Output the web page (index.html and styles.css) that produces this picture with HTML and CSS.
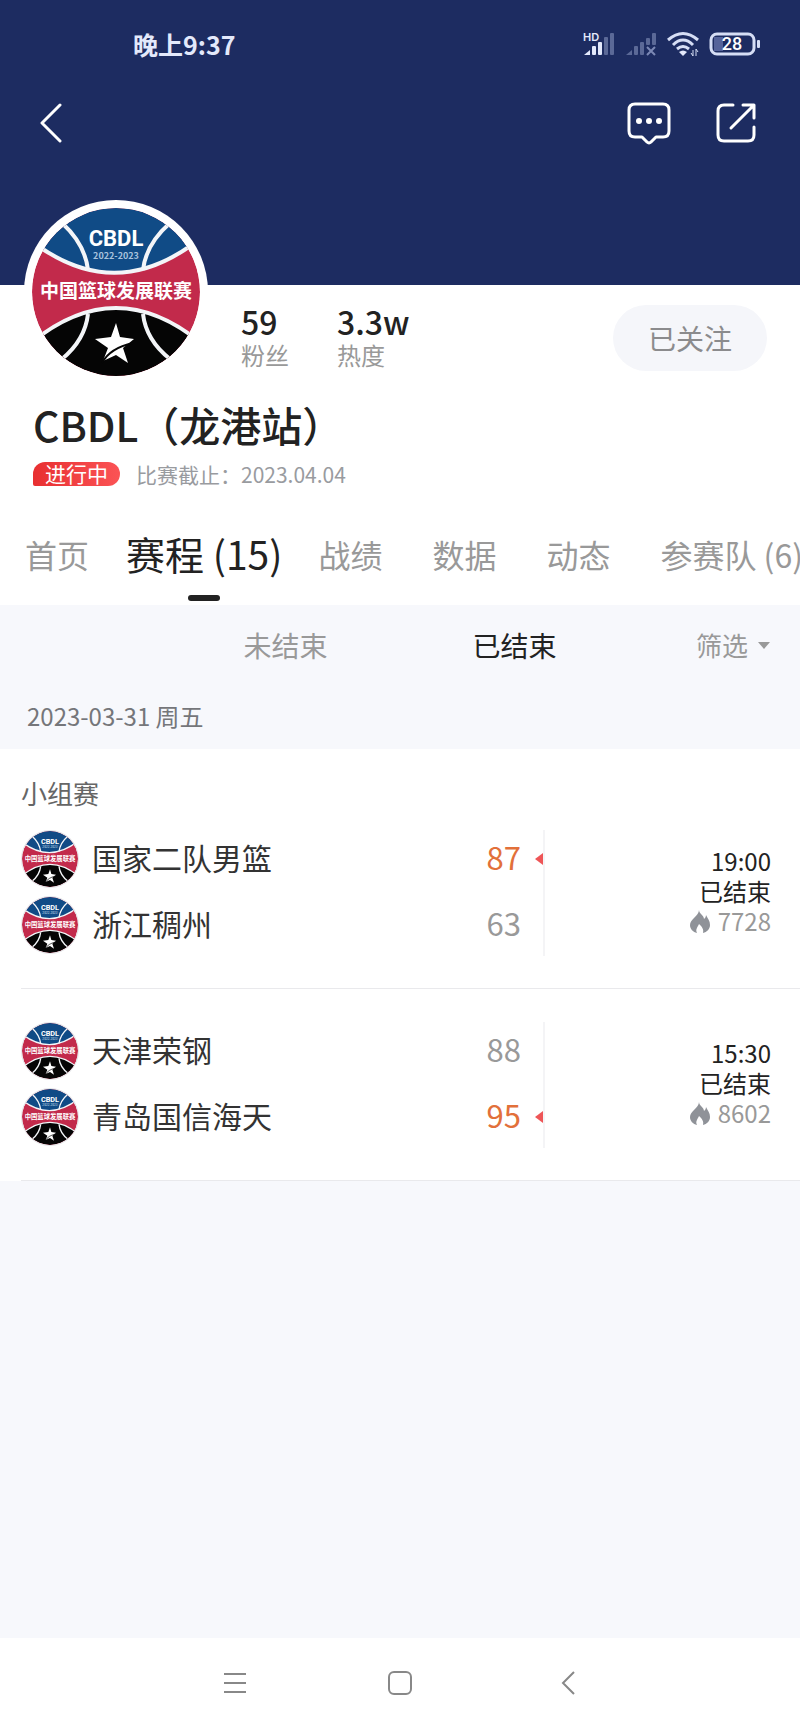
FILE: index.html
```html
<!DOCTYPE html>
<html lang="zh-CN">
<head>
<meta charset="utf-8">
<meta name="viewport" content="width=device-width, initial-scale=1">
<title>CBDL（龙港站）</title>
<link rel="stylesheet" href="styles.css">
</head>
<body>
<svg class="defs" width="0" height="0" aria-hidden="true">
  <defs>
    <clipPath id="ball"><circle cx="84" cy="84" r="84"/></clipPath>
    <symbol id="cbdl" viewBox="0 0 168 168">
      <g clip-path="url(#ball)">
        <rect width="168" height="168" fill="#c22a4b"/>
        <path d="M-8 27Q84 104 176 24V-4H-8Z" fill="#104b86"/>
        <path d="M-8 141Q84 59 176 141V172H-8Z" fill="#050505"/>
        <g fill="none" stroke="#f3f5f8" stroke-width="4">
          <path d="M-8 27Q84 104 176 24"/>
          <path d="M-8 141Q84 59 176 141"/>
          <path d="M30 15Q53 36 56 62M138 15Q114 36 111 62M56 106Q53 132 30 151M111 106Q114 132 138 151"/>
        </g>
        <path d="M84 115L88 129L102 131L91 140L96 155L84 147L71 153L76 140L63 131L79 129Z" fill="#fff"/>
        <path d="M70 155Q78 140 101 135" fill="none" stroke="#050505" stroke-width="2"/>
        <text class="logo-name" x="84" y="38">CBDL</text>
        <text class="logo-year" x="84" y="51">2022-2023</text>
        <text class="logo-league" x="84" y="90">中国篮球发展联赛</text>
      </g>
    </symbol>
    <symbol id="flame" viewBox="0 0 20 23">
      <path d="M9 0C9 6 0 9 0 15C0 19 3 22 7 23C5 19 8 17 9 14C12 17 14 19 13 23C17 22 20 19 20 15C20 11 18 9 16 5C16 7 15 8 14 9C14 5 9 4 9 0Z" fill="currentColor"/>
    </symbol>
  </defs>
</svg>
<div class="page">
  <header class="hero">
    <div class="status">
      <span class="clock">晚上9:37</span>
      <div class="status-icons">
        <svg width="32" height="26" viewBox="0 0 32 26" aria-hidden="true">
          <text class="hd" x="0" y="10">HD</text>
          <g fill="#e3e9fb"><path d="M1 24L7 19V24Z"/><rect x="9" y="15" width="4" height="9" rx="1"/><rect x="15" y="11" width="4" height="13" rx="1"/></g>
          <g fill="#5b6997"><rect x="21" y="6" width="4" height="18" rx="1"/><rect x="27" y="2" width="4" height="22" rx="1"/></g>
        </svg>
        <svg width="32" height="26" viewBox="0 0 32 26" aria-hidden="true">
          <g fill="#5b6997"><path d="M1 24L7 19V24Z"/><rect x="9" y="15" width="4" height="9" rx="1"/><rect x="15" y="11" width="4" height="13" rx="1"/><rect x="21" y="7" width="4" height="7" rx="1"/><rect x="27" y="2" width="4" height="12" rx="1"/></g>
          <path d="M22 16L30 24M30 16L22 24" stroke="#7c89b5" stroke-width="2"/>
        </svg>
        <svg width="32" height="26" viewBox="0 0 32 26" aria-hidden="true">
          <g fill="none" stroke="#d6def5" stroke-width="3"><path d="M1 9Q16 -4 31 9M6 14Q16 4 26 14M10 18Q16 13 22 18"/></g>
          <path d="M12 21Q16 18 20 21L16 25Z" fill="#e3e9fb"/>
          <path d="M26 19V25L24 22M29 25V18L31 21" fill="none" stroke="#d6def5" stroke-width="1"/>
        </svg>
        <svg class="battery" width="51" height="26" viewBox="0 0 51 26" aria-hidden="true">
          <rect x="5" y="6" width="9" height="14" fill="#55639a"/>
          <rect x="2" y="3" width="43" height="20" rx="6" fill="none" stroke="#d6def5" stroke-width="3"/>
          <rect x="48" y="9" width="3" height="8" rx="1" fill="#d6def5"/>
          <text class="battery-level" x="23" y="19">28</text>
        </svg>
      </div>
    </div>
    <div class="toolbar">
      <button class="icon-button" aria-label="返回"><svg width="24" height="42" viewBox="0 0 24 42"><path d="M22 3L4 21L22 39"/></svg></button>
      <div class="toolbar-actions">
        <button class="icon-button" aria-label="评论"><svg width="44" height="44" viewBox="0 0 44 44"><path d="M8 3H36Q42 3 42 9V30Q42 36 36 36H29L24 41Q22 43 20 41L15 36H8Q2 36 2 30V9Q2 3 8 3Z"/><g class="dots"><circle cx="12" cy="20" r="3"/><circle cx="22" cy="20" r="3"/><circle cx="32" cy="20" r="3"/></g></svg></button>
        <button class="icon-button" aria-label="分享"><svg width="42" height="42" viewBox="0 0 42 42"><path d="M18 3H9Q3 3 3 9V33Q3 39 9 39H33Q39 39 39 33V25M28 3H39V16M38 4L16 26"/></svg></button>
      </div>
    </div>
  </header>

  <section class="profile">
    <div class="profile-top">
      <svg class="avatar" role="img" aria-label="CBDL"><use href="#cbdl"/></svg>
      <dl class="stats">
        <div class="stat"><dd>59</dd><dt>粉丝</dt></div>
        <div class="stat"><dd>3.3w</dd><dt>热度</dt></div>
      </dl>
      <button class="follow">已关注</button>
    </div>
    <h1 class="title">CBDL（龙港站）</h1>
    <p class="meta"><span class="badge">进行中</span><span>比赛截止：2023.04.04</span></p>
  </section>

  <nav class="tabs">
    <a href="#home">首页</a>
    <a href="#schedule" class="active">赛程 (15)</a>
    <a href="#record">战绩</a>
    <a href="#data">数据</a>
    <a href="#news">动态</a>
    <a href="#teams">参赛队 (6)</a>
  </nav>

  <main class="schedule">
    <div class="filters">
      <div class="segments">
        <button class="segment">未结束</button>
        <button class="segment selected">已结束</button>
      </div>
      <button class="filter">筛选<svg width="12" height="7" viewBox="0 0 12 7" aria-hidden="true"><path d="M0 0H12L6 7Z" fill="currentColor"/></svg></button>
    </div>
    <h2 class="date">2023-03-31 周五</h2>
    <section class="group">
      <h3 class="stage">小组赛</h3>
      <article class="match">
        <div class="teams">
          <div class="team winner"><svg class="crest" aria-hidden="true"><use href="#cbdl"/></svg><span class="name">国家二队男篮</span><span class="score">87</span></div>
          <div class="team"><svg class="crest" aria-hidden="true"><use href="#cbdl"/></svg><span class="name">浙江稠州</span><span class="score">63</span></div>
        </div>
        <div class="info">
          <time>19:00</time><span>已结束</span>
          <span class="heat"><svg width="20" height="23" aria-hidden="true"><use href="#flame"/></svg>7728</span>
        </div>
      </article>
      <article class="match">
        <div class="teams">
          <div class="team"><svg class="crest" aria-hidden="true"><use href="#cbdl"/></svg><span class="name">天津荣钢</span><span class="score">88</span></div>
          <div class="team winner"><svg class="crest" aria-hidden="true"><use href="#cbdl"/></svg><span class="name">青岛国信海天</span><span class="score">95</span></div>
        </div>
        <div class="info">
          <time>15:30</time><span>已结束</span>
          <span class="heat"><svg width="20" height="23" aria-hidden="true"><use href="#flame"/></svg>8602</span>
        </div>
      </article>
    </section>
  </main>

  <footer class="system-nav">
    <button aria-label="最近任务"><svg width="24" height="24" viewBox="0 0 24 24"><path d="M1 3H23M1 12H23M1 21H23"/></svg></button>
    <button aria-label="主屏幕"><svg width="24" height="24" viewBox="0 0 24 24"><rect x="1" y="1" width="22" height="22" rx="5"/></svg></button>
    <button aria-label="返回上一页"><svg width="24" height="24" viewBox="0 0 24 24"><path d="M21 1L10 12L21 23"/></svg></button>
  </footer>
</div>
</body>
</html>
```

FILE: styles.css
```css
* { box-sizing: border-box; }

body {
  margin: 0;
  font-family: "Noto Sans CJK SC", "Noto Sans", sans-serif;
  color: #222;
  background: #f7f8fc;
}

h1, h2, h3, p, dl, dd { margin: 0; font-weight: 400; }

button {
  padding: 0;
  border: 0;
  background: none;
  font: inherit;
  color: inherit;
}

a { color: inherit; text-decoration: none; }
svg { display: block; flex: none; }
.defs { position: absolute; }

.page {
  display: flex;
  flex-direction: column;
  min-height: 100vh;
}

/* Cover */
.hero {
  height: 285px;
  background: #1d2c61;
  color: #e3e9fb;
}

.status {
  display: flex;
  align-items: center;
  justify-content: space-between;
  height: 88px;
  padding: 0 40px 0 133px;
}

.clock { font-size: 25px; font-weight: 700; line-height: 36px; }
.status-icons { display: flex; gap: 10px; }
.status-icons svg { overflow: visible; }
.hd { font: 600 11px Inter, sans-serif; fill: #e3e9fb; }
.battery-level {
  font: 500 18px Roboto, sans-serif;
  fill: #fff;
  text-anchor: middle;
}

.toolbar {
  display: flex;
  align-items: center;
  justify-content: space-between;
  height: 70px;
  padding: 0 43px 0 38px;
}

.toolbar-actions { display: flex; align-items: center; gap: 44px; }

.icon-button path {
  fill: none;
  stroke: #fff;
  stroke-width: 3;
  stroke-linecap: round;
  stroke-linejoin: round;
}

.dots { fill: #fff; }

/* Profile */
.profile { background: #fff; padding: 0 33px; }

.profile-top { display: flex; align-items: flex-start; }

.avatar {
  width: 184px;
  height: 184px;
  margin: -85px 0 0 -9px;
  padding: 8px;
  border-radius: 50%;
  background: #fff;
}

.logo-name {
  font: 700 22px Roboto, sans-serif;
  fill: #fff;
  text-anchor: middle;
}

.logo-year {
  font: 700 9px "Noto Sans CJK SC", sans-serif;
  fill: #a9c3de;
  text-anchor: middle;
}

.logo-league {
  font: 700 19px "Noto Sans CJK SC", sans-serif;
  fill: #fff;
  text-anchor: middle;
}

.stats { display: flex; flex: 1; padding: 18px 0 0 33px; }
.stat { display: flex; flex-direction: column; width: 96px; }
.stat dd { font-size: 32px; font-weight: 500; line-height: 36px; }
.stat dt { font-size: 24px; line-height: 32px; color: #999; }

.follow {
  width: 154px;
  height: 66px;
  margin-top: 20px;
  border-radius: 33px;
  background: #f5f6fa;
  font-size: 28px;
  line-height: 40px;
  color: #8b8b8d;
}

.title {
  padding-top: 16px;
  font-size: 41px;
  font-weight: 500;
  line-height: 48px;
}

.meta {
  display: flex;
  align-items: center;
  gap: 16px;
  padding-top: 12px;
  font-size: 21px;
  line-height: 28px;
  color: #999b9f;
}

.badge {
  padding: 0 12px 2px;
  border-radius: 12px 12px 12px 2px;
  background: linear-gradient(90deg, #e82f31, #fb5355);
  line-height: 22px;
  color: #fff;
}

/* Tabs */
.tabs {
  display: flex;
  align-items: center;
  gap: 50px;
  padding: 19px 0 4px 25px;
  overflow: hidden;
  background: #fff;
  font-size: 32px;
  line-height: 48px;
  white-space: nowrap;
  color: #999;
}

.tabs .active {
  display: flex;
  flex-direction: column;
  align-items: center;
  gap: 18px;
  margin: 0 -14px 0 -13px;
  padding-top: 22px;
  font-size: 39px;
  color: #222;
}

.tabs .active::after {
  content: "";
  width: 32px;
  height: 6px;
  border-radius: 3px;
  background: #222;
}

/* Schedule */
.schedule { flex: 1; }

.filters {
  display: grid;
  grid-template-columns: 1fr auto 1fr;
  align-items: center;
  height: 80px;
  padding: 0 30px;
  color: #999;
}

.segments { display: flex; grid-column: 2; }
.segment { width: 229px; font-size: 28px; line-height: 40px; }
.selected { color: #222; }

.filter {
  display: flex;
  align-items: center;
  justify-self: end;
  gap: 10px;
  font-size: 26px;
  line-height: 40px;
  white-space: nowrap;
}

.date {
  padding: 13px 27px 15px;
  font-size: 24px;
  line-height: 36px;
  color: #75767a;
}

.group { padding: 24px 0 0 21px; background: #fff; }
.stage { font-size: 26px; line-height: 40px; color: #666; }

.match {
  display: flex;
  justify-content: space-between;
  height: 192px;
  padding: 33px 29px 0 0;
  border-bottom: 1px solid #e9e9ec;
}

.stage + .match { height: 176px; padding-top: 17px; }

.teams {
  display: flex;
  flex: 0 1 524px;
  flex-direction: column;
  gap: 8px;
  height: 126px;
  padding-left: 1px;
  border-right: 2px solid #f4f4f6;
}

.team { display: flex; align-items: center; height: 58px; }
.crest { width: 56px; height: 56px; border-radius: 50%; box-shadow: 0 0 0 1px #e4e5e8; }
.name, .score { padding-bottom: 4px; line-height: 40px; }
.name { flex: 1; padding-left: 14px; font-size: 30px; color: #333; }
.score { padding-right: 22px; font-size: 31px; color: #999; }
.winner .score { padding-right: 14px; color: #e2703a; }

.winner::after {
  content: "";
  border: solid transparent;
  border-width: 6px 8px 6px 0;
  border-right-color: #ee5557;
}

.info {
  display: flex;
  flex-direction: column;
  align-items: flex-end;
  padding-top: 16px;
  font-size: 24px;
  line-height: 30px;
}

.heat { display: flex; align-items: center; gap: 8px; color: #999; }
.heat svg { color: #8f9298; }

/* System navigation */
.system-nav {
  display: flex;
  align-items: center;
  justify-content: center;
  gap: 141px;
  height: 95px;
  padding-bottom: 6px;
  background: #fff;
}

.system-nav svg { fill: none; stroke: #888; stroke-width: 2; }
```
